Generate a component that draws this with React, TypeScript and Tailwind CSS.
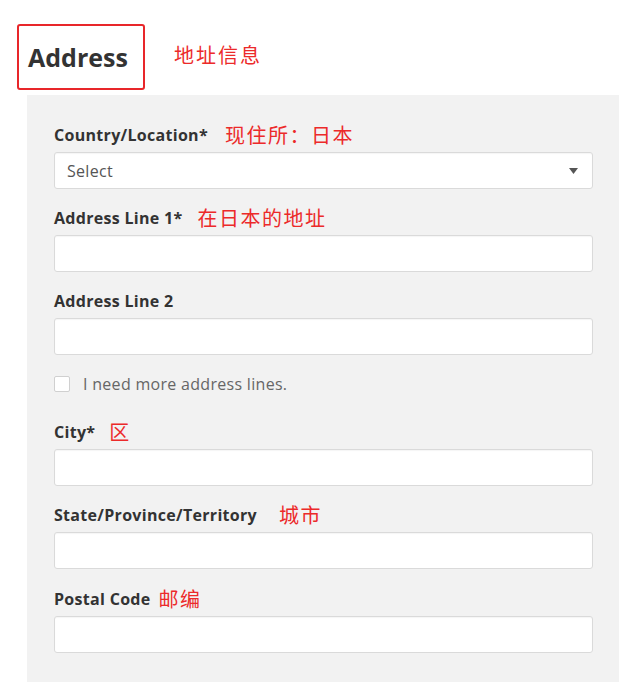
import { useState } from "react";

type FieldProps = {
  label: string;
  note?: string;
  noteGap?: string;
  select?: boolean;
  className?: string;
};

const cjk = "font-['Noto_Sans_CJK_SC',sans-serif]";

function Field({ label, note, noteGap = "ml-4", select, className = "" }: FieldProps) {
  return (
    <div className={className}>
      <div className="flex items-center h-5 mb-[7px]">
        <span className="text-[16px] font-bold tracking-[0.3px] text-[#333]">{label}</span>
        {note ? (
          <span className={`${noteGap} ${cjk} text-[20px] leading-none tracking-[1.5px] text-[#ec2a2a]`}>
            {note}
          </span>
        ) : null}
      </div>
      {select ? (
        <div className="h-[37px] bg-white border border-[#dadada] rounded-[3px] flex items-center justify-between pl-[12px] pr-[14px] shadow-[inset_0_1px_1px_rgba(0,0,0,0.04)]">
          <span className="text-[16px] tracking-[0.3px] text-[#555]">Select</span>
          <svg width="9" height="6" viewBox="0 0 9 6">
            <path d="M0 0 L9 0 L4.5 6 Z" fill="#555" />
          </svg>
        </div>
      ) : (
        <input
          type="text"
          className="block w-full h-[37px] bg-white border border-[#dadada] rounded-[3px] outline-none shadow-[inset_0_1px_1px_rgba(0,0,0,0.04)]"
        />
      )}
    </div>
  );
}

export default function App() {
  const [more, setMore] = useState(false);

  return (
    <div className="w-[637px] h-[682px] overflow-hidden bg-white font-['Open_Sans',sans-serif]">
      <div className="flex items-center pt-[24px] pl-[17px]">
        <div className="w-[128px] h-[66px] border-2 border-[#e8262a] rounded-[3px] flex items-center pl-[9px]">
          <h2 className="text-[25px] font-bold text-[#333] leading-none">Address</h2>
        </div>
        <span className={`ml-[29px] -mt-[4px] ${cjk} text-[20px] tracking-[2px] text-[#ec2a2a]`}>
          地址信息
        </span>
      </div>
      <div className="ml-[27px] mt-[5px] w-[592px] bg-[#f2f2f2] pt-[30px] pl-[27px] pr-[26px] pb-[40px]">
        <Field label="Country/Location*" note="现住所：日本" noteGap="ml-[17px]" select />
        <Field className="mt-[19px]" label="Address Line 1*" note="在日本的地址" noteGap="ml-[15px]" />
        <Field className="mt-[19px]" label="Address Line 2" />
        <label className="mt-[19px] h-5 flex items-center gap-[13px] cursor-pointer">
          <span
            className={`w-4 h-4 border border-[#d0d0d0] rounded-[2px] ${more ? "bg-[#555]" : "bg-white"}`}
            onClick={() => setMore((v) => !v)}
          />
          <span className="text-[16px] tracking-[0.3px] text-[#666]">I need more address lines.</span>
        </label>
        <Field className="mt-[28px]" label="City*" note="区" noteGap="ml-[14px]" />
        <Field className="mt-[19px]" label="State/Province/Territory" note="城市" noteGap="ml-[22px]" />
        <Field className="mt-[20px]" label="Postal Code" note="邮编" noteGap="ml-[8px]" />
      </div>
    </div>
  );
}
